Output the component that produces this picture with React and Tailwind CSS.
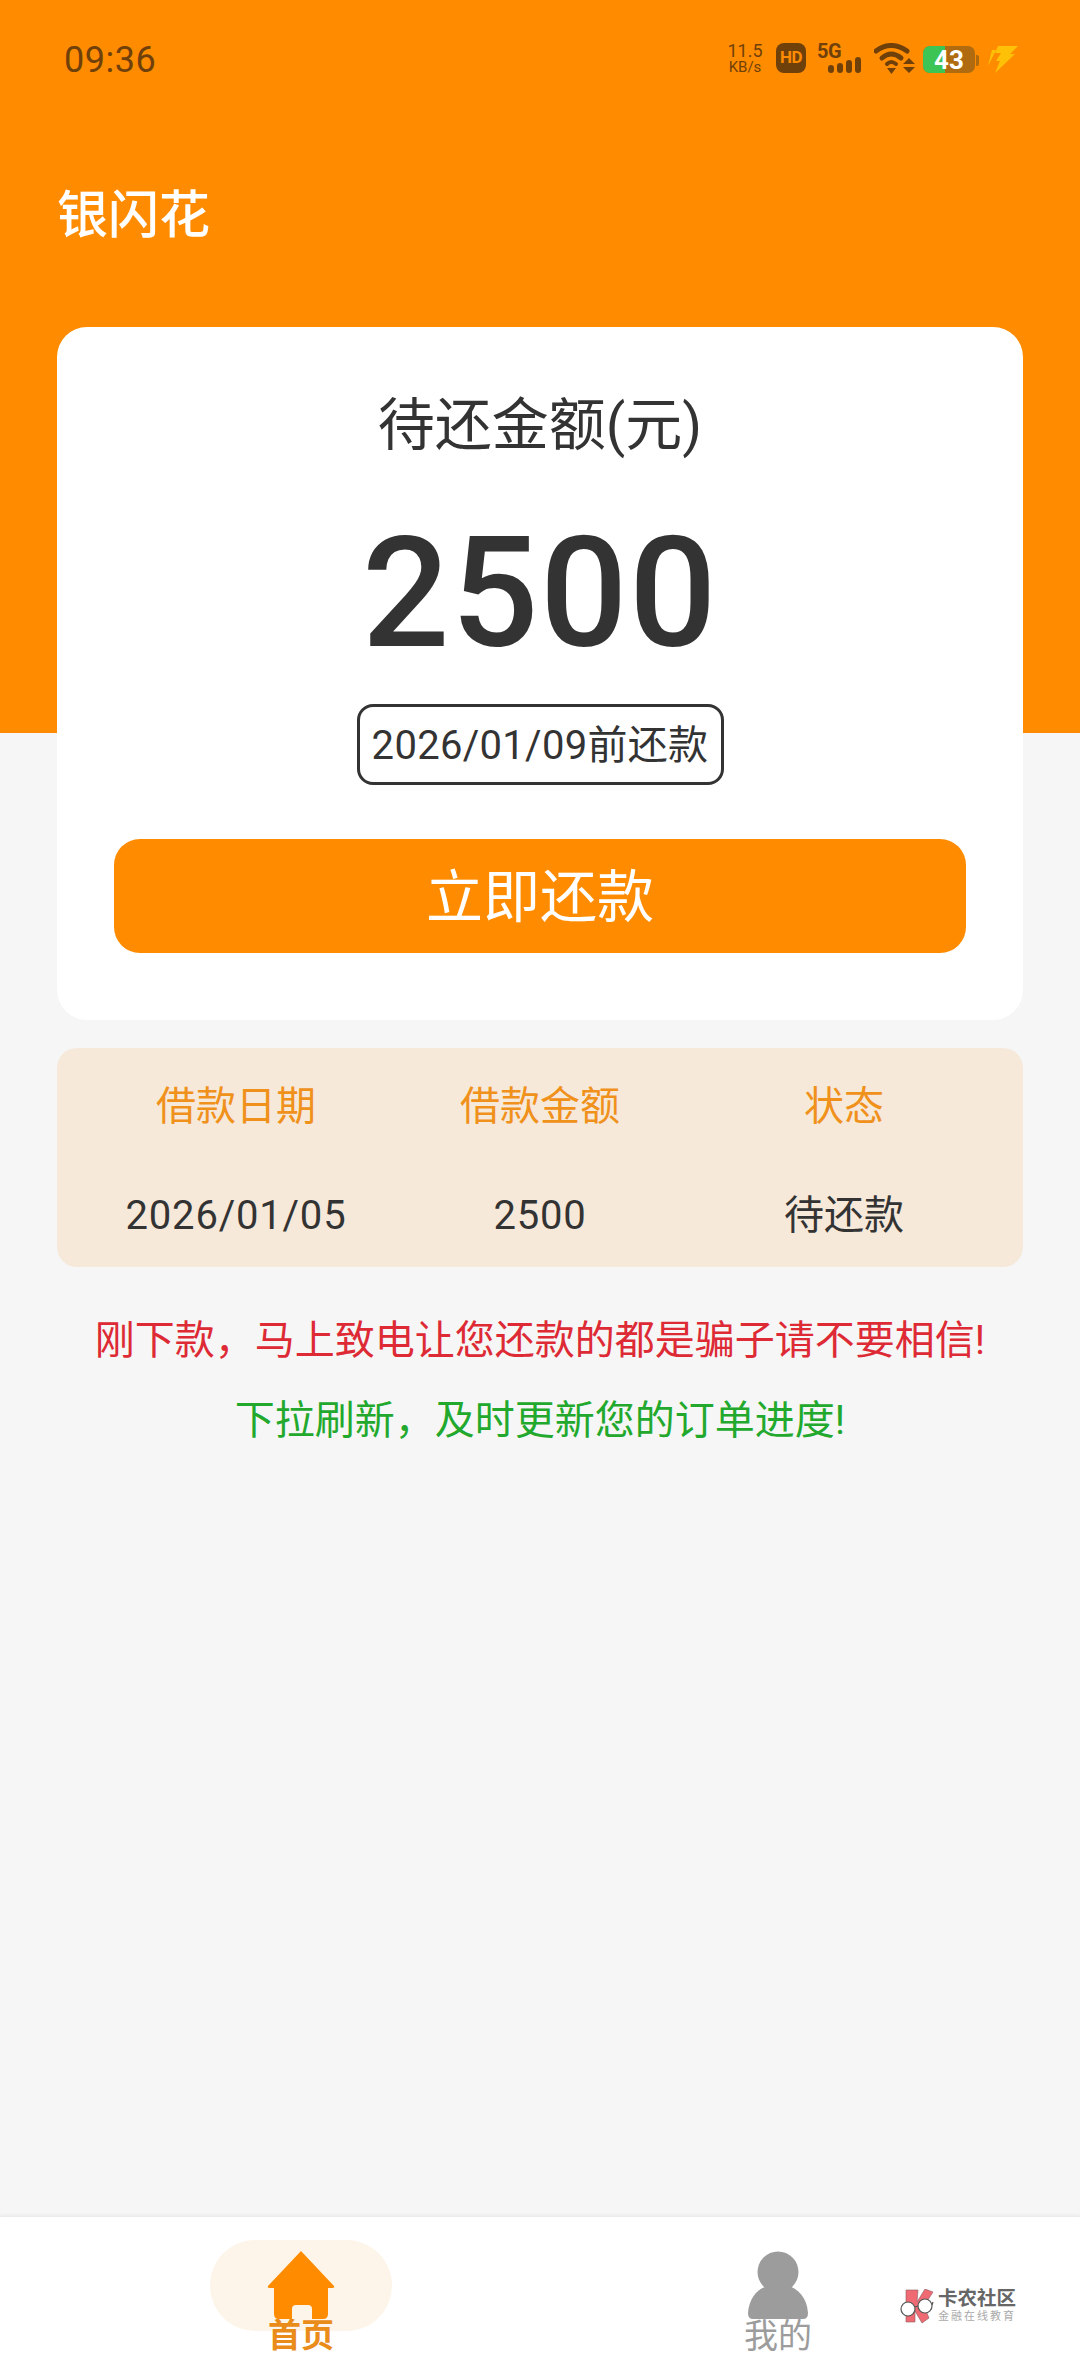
const CJK = "font-['Roboto','Noto_Sans_CJK_SC',sans-serif]";

function StatusBar() {
  return (
    <div className="flex h-[90px] items-start justify-between pl-[64px] pr-[61px] pt-[43px] text-[#70400a]">
      <span className="text-[36px] leading-[34px] tracking-[0.5px]">09:36</span>
      <div className="flex items-start">
        <div className="flex w-[36px] flex-col items-center leading-none">
          <span className="text-[18px] leading-[15px]">11.5</span>
          <span className="text-[15px] leading-[15px] mt-[2px]">KB/s</span>
        </div>
        <div className="ml-[13px] flex h-[30px] w-[30px] items-center justify-center rounded-[8px] bg-[#70400a] text-[17px] font-bold tracking-[-0.5px] text-[#ff8c00]">HD</div>
        <div className="relative ml-[11px] h-[31px] w-[46px]">
          <span className="absolute left-0 top-0 text-[20px] font-bold leading-[16px] tracking-[-0.5px]">5G</span>
          <svg className="absolute left-0 top-0" width="46" height="31" viewBox="0 0 46 31">
            <rect x="11" y="22" width="6" height="8" rx="3" fill="#70400a" />
            <rect x="20" y="20" width="6" height="10" rx="3" fill="#70400a" />
            <rect x="29" y="17" width="6" height="13" rx="3" fill="#70400a" />
            <rect x="38" y="14" width="6" height="16" rx="3" fill="#70400a" />
          </svg>
        </div>
        <svg className="ml-[11px]" width="42" height="31" viewBox="0 0 42 31">
          <path d="M2 8 Q17 -3 33 8" fill="none" stroke="#70400a" strokeWidth="5" strokeLinecap="round" />
          <path d="M8 15 Q17 7 27 15" fill="none" stroke="#70400a" strokeWidth="5" strokeLinecap="round" />
          <path d="M13 21 Q17 17 22 21" fill="none" stroke="#70400a" strokeWidth="4" strokeLinecap="round" />
          <path d="M13 25 H22 L17.500 31 Z" fill="#70400a" />
          <path d="M35 15 L41 21 H29 Z M29 24 H41 L35 30 Z" fill="#70400a" />
        </svg>
        <div className="relative ml-[7px] mt-[3px] flex h-[27px] w-[52px] overflow-hidden rounded-[7px] bg-[#b06a10]">
          <div className="h-full w-[22px] bg-[#3cc455]" />
          <span className="absolute inset-0 flex items-center justify-center text-[26px] font-bold leading-none text-white">43</span>
        </div>
        <div className="ml-[1px] mt-[12px] h-[11px] w-[3px] rounded-r-[2px] bg-[#b06a10]" />
        <svg className="ml-[8px] mt-[3px]" width="32" height="27" viewBox="0 0 32 27">
          <path d="M11 0 H31 L23 8 H28 L8 27 L13 15 H9 L14 7 H8 Z" fill="#ffc107" />
          <path d="M5 4 H9 L1 20 Z" fill="#ffc107" />
        </svg>
      </div>
    </div>
  );
}

function Logo() {
  return (
    <div className="absolute bottom-[52px] right-[63px] flex h-[35px] w-[117px] items-start">
      <svg width="36" height="35" viewBox="0 0 36 35" className="shrink-0">
        <path d="M6 1 H18 L17 13 L25 0 L33 3 L24 17 L29 29 L22 34 L15 22 L15 33 L6 33 Z" fill="#ef6a72" stroke="#8a5a60" strokeWidth="0.6" />
        <circle cx="8" cy="20" r="7" fill="#fff" stroke="#555" strokeWidth="1.200" />
        <circle cx="25" cy="17" r="7" fill="#fff" stroke="#555" strokeWidth="1.200" />
        <path d="M15 18 L18 17 M32 16 L33 13" stroke="#555" strokeWidth="1.200" fill="none" />
      </svg>
      <div className="ml-[2px] flex flex-col whitespace-nowrap">
        <span className="text-[19.5px] font-bold leading-[19px] text-[#666]">卡农社区</span>
        <span className="mt-[3px] text-[11px] leading-[11px] tracking-[2px] text-[#aaa]">金融在线教育</span>
      </div>
    </div>
  );
}

export default function App() {
  return (
    <div className={`relative flex h-[2376px] w-[1080px] flex-col overflow-hidden bg-[#f6f6f6] ${CJK}`}>
      <header className="h-[733px] shrink-0 bg-[#ff8c00]">
        <StatusBar />
        <h1 className="ml-[57px] mt-[97px] text-[51px] font-medium leading-[58px] text-white">银闪花</h1>
      </header>

      <main className="-mt-[406px] flex flex-1 flex-col px-[57px]">
        <section className="flex h-[693px] flex-col items-center rounded-[30px] bg-white px-[57px] text-[#333]">
          <div className="mt-[64px] text-[57px] leading-[70px]">待还金额(元)</div>
          <div className="mt-[43px] text-[154px] font-medium leading-[180px] tracking-[1.5px]">2500</div>
          <div className="mt-[20px] flex h-[81px] w-[367px] items-center justify-center rounded-[16px] border-[3px] border-[#333] pt-[3px] text-[40px] leading-none tracking-[0.3px]">2026/01/09前还款</div>
          <button className="mt-[54px] h-[114px] w-full rounded-[26px] bg-[#ff8c00] pt-[3px] text-[57px] text-white">立即还款</button>
        </section>

        <section className="mt-[28px] grid h-[219px] grid-cols-3 grid-rows-2 rounded-[20px] bg-[#f6e9da] px-[27px] text-center text-[40px]">
          <div className="pt-[33px] leading-[52px] text-[#f0911c]">借款日期</div>
          <div className="pt-[33px] leading-[52px] text-[#f0911c]">借款金额</div>
          <div className="pt-[33px] leading-[52px] text-[#f0911c]">状态</div>
          <div className="pt-[32px] leading-[52px] tracking-[0.8px] text-[#333]">2026/01/05</div>
          <div className="pt-[32px] leading-[52px] tracking-[0.8px] text-[#333]">2500</div>
          <div className="pt-[32px] leading-[52px] text-[#333]">待还款</div>
        </section>

        <p className="mt-[48px] text-center text-[40px] leading-[52px] text-[#dd2a35]">刚下款，马上致电让您还款的都是骗子请不要相信!</p>
        <p className="mt-[28px] text-center text-[40px] leading-[52px] text-[#22a92d]">下拉刷新，及时更新您的订单进度!</p>
      </main>

      <nav className="relative flex h-[159px] shrink-0 items-start bg-white shadow-[0_-2px_3px_rgba(0,0,0,0.05)]">
        <div className="ml-[210px] mt-[23px] h-[91px] w-[182px] rounded-[46px] bg-[#fdf5e9]">
          <div className="flex flex-col items-center">
            <svg className="mt-[11px] shrink-0" width="68" height="68" viewBox="0 0 68 68">
              <path d="M34 0 L67 35 Q68 37 65 37 H61 V63 Q61 68 56 68 H45 V58 Q45 54 41 54 H29 Q25 54 25 58 V68 H12 Q7 68 7 63 V37 H3 Q0 37 1 35 Z" fill="#ff8c00" />
            </svg>
            <span className="shrink-0 text-[33px] font-bold leading-[34px] text-[#e98c1a]">首页</span>
          </div>
        </div>
        <div className="ml-[351px] mt-[34px] flex w-[70px] flex-col items-center">
          <svg className="shrink-0" width="60" height="68" viewBox="0 0 60 68">
            <circle cx="30" cy="21" r="20.5" fill="#9c9c9c" />
            <path d="M0 62 C1 46 11 37 20 35 L40 35 C49 37 59 46 60 62 Q60 68 55 68 H5 Q0 68 0 62 Z" fill="#9c9c9c" />
          </svg>
          <span className="shrink-0 text-[34px] leading-[34px] text-[#9c9c9c]">我的</span>
        </div>
        <Logo />
      </nav>
    </div>
  );
}
